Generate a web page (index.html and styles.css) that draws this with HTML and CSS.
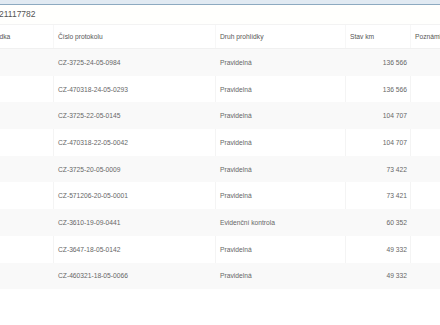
FILE: index.html
```html
<!DOCTYPE html>
<html lang="cs">
<head>
<meta charset="utf-8">
<link rel="stylesheet" href="styles.css">
</head>
<body>
<div class="page">
  <div class="topbar"></div>
  <div class="shift">
    <div class="title">21117782</div>
    <table class="grid">
      <colgroup>
        <col class="c0"><col class="c1"><col class="c2"><col class="c3"><col class="c4">
      </colgroup>
      <thead>
        <tr><th>Prohlídka</th><th>Číslo protokolu</th><th>Druh prohlídky</th><th>Stav km</th><th>Poznámka</th></tr>
      </thead>
      <tbody>
        <tr><td></td><td>CZ-3725-24-05-0984</td><td>Pravidelná</td><td class="num">136 566</td><td></td></tr>
        <tr><td></td><td>CZ-470318-24-05-0293</td><td>Pravidelná</td><td class="num">136 566</td><td></td></tr>
        <tr><td></td><td>CZ-3725-22-05-0145</td><td>Pravidelná</td><td class="num">104 707</td><td></td></tr>
        <tr><td></td><td>CZ-470318-22-05-0042</td><td>Pravidelná</td><td class="num">104 707</td><td></td></tr>
        <tr><td></td><td>CZ-3725-20-05-0009</td><td>Pravidelná</td><td class="num">73 422</td><td></td></tr>
        <tr><td></td><td>CZ-571206-20-05-0001</td><td>Pravidelná</td><td class="num">73 421</td><td></td></tr>
        <tr><td></td><td>CZ-3610-19-09-0441</td><td>Evidenční kontrola</td><td class="num">60 352</td><td></td></tr>
        <tr><td></td><td>CZ-3647-18-05-0142</td><td>Pravidelná</td><td class="num">49 332</td><td></td></tr>
        <tr><td></td><td>CZ-460321-18-05-0066</td><td>Pravidelná</td><td class="num">49 332</td><td></td></tr>
      </tbody>
    </table>
  </div>
</div>
</body>
</html>
```
FILE: styles.css
```css
html, body {
  margin: 0;
  padding: 0;
  background: #ffffff;
}
body {
  font-family: "Liberation Sans", Arial, sans-serif;
  color: #555;
  overflow: hidden;
}
.page {
  width: 440px;
  height: 325px;
  overflow: hidden;
}
.topbar {
  height: 4px;
  background: #e1eaf2;
  border-bottom: 1px solid #8daac0;
}
.shift {
  margin-left: -23px;
  width: 560px;
}
.title {
  height: 19px;
  line-height: 19px;
  padding-left: 22px;
  font-size: 8.5px;
  color: #555;
  background: #fffffd;
  border-bottom: 1px solid #f3f3f3;
}
.grid {
  border-collapse: collapse;
  table-layout: fixed;
  width: 560px;
  font-size: 6.7px;
}
.c0 { width: 76px; }
.c1 { width: 162px; }
.c2 { width: 130px; }
.c3 { width: 65px; }
.grid th {
  height: 23px;
  padding: 0 4px;
  text-align: left;
  font-weight: normal;
  color: #555;
  border-bottom: 1px solid #f0f0f0;
  border-left: 1px solid #f7f7f7;
  white-space: nowrap;
  overflow: hidden;
}
.grid td {
  height: 26.7px;
  padding: 0 4px;
  color: #666;
  border-left: 1px solid #f4f4f4;
  white-space: nowrap;
}
.grid tbody tr:nth-child(odd) td {
  background: #f9f9f9;
  border-left-color: #f9f9f9;
}
.grid td.num {
  text-align: right;
  padding-right: 3px;
}
```
